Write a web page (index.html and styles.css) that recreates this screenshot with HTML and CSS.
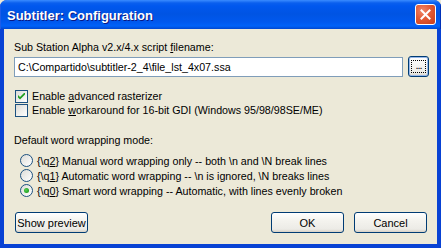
FILE: index.html
```html
<!DOCTYPE html>
<html lang="en">
<head>
    <meta charset="UTF-8">
    <title>Subtitler: Configuration</title>
    <link rel="stylesheet" href="styles.css">
</head>
<body>
    <div class="window">
        <div class="titlebar">
            <span class="title">Subtitler: Configuration</span>
            <button class="close-btn" aria-label="Close">
                <svg width="11" height="11" viewBox="0 0 11 11">
                    <path d="M1.5 1.5 L9.5 9.5 M9.5 1.5 L1.5 9.5" stroke="#fff" stroke-width="2" stroke-linecap="square"/>
                </svg>
            </button>
        </div>

        <div class="client">
            <div class="label">Sub Station Alpha v2.x/4.x script <u>f</u>ilename:</div>
            <div class="file-row">
                <input type="text" class="file-input" value="C:\Compartido\subtitler-2_4\file_lst_4x07.ssa">
                <button class="browse-btn"><span class="focus-rect">...</span></button>
            </div>

            <div class="checks">
                <label class="check-row">
                    <span class="checkbox">
                        <svg width="7" height="7" viewBox="0 0 7 7">
                            <path d="M0 2 L0 4.5 L2 6.5 L7 1.5 L7 -1 L2 4 Z" fill="#21A121"/>
                        </svg>
                    </span>
                    <span>Enable <u>a</u>dvanced rasterizer</span>
                </label>
                <label class="check-row">
                    <span class="checkbox"></span>
                    <span>Enable <u>w</u>orkaround for 16-bit GDI (Windows 95/98/98SE/ME)</span>
                </label>
            </div>

            <div class="label section-label">Default word wrapping mode:</div>
            <div class="radios">
                <label class="radio-row"><span class="radio"></span><span>{\q<u>2</u>} Manual word wrapping only -- both \n and \N break lines</span></label>
                <label class="radio-row"><span class="radio"></span><span>{\q<u>1</u>} Automatic word wrapping -- \n is ignored, \N breaks lines</span></label>
                <label class="radio-row"><span class="radio selected"></span><span>{\q<u>0</u>} Smart word wrapping -- Automatic, with lines evenly broken</span></label>
            </div>

            <div class="button-row">
                <button class="btn">Show preview</button>
                <div class="spacer"></div>
                <button class="btn">OK</button>
                <button class="btn">Cancel</button>
            </div>
        </div>
    </div>
</body>
</html>
```

FILE: styles.css
```css
html, body {
    margin: 0;
    padding: 0;
    background: #ECE9D8;
}
body {
    font-family: "Liberation Sans", Arial, sans-serif;
    font-size: 10.7px;
    color: #000;
}
.window {
    width: 441px;
    height: 248px;
    box-sizing: border-box;
    display: flex;
    flex-direction: column;
    background: #0842D4;
    border-radius: 7px 7px 0 0;
    overflow: hidden;
}
.titlebar {
    height: 29px;
    flex-shrink: 0;
    display: flex;
    align-items: center;
    padding: 0 5px 0 7px;
    background: linear-gradient(#3A8CFF 0, #0A5FEE 3px, #0058EE 6px, #0054E3 14px, #0058EE 22px, #0062F8 26px, #0047D0 29px);
    box-shadow: inset 1px 0 #1D5CE8, inset -1px 0 #0032B8;
}
.title {
    flex: 1;
    color: #fff;
    font-weight: bold;
    font-size: 13px;
    text-shadow: 1px 1px #0A1883;
    margin-top: 1px;
}
.close-btn {
    width: 21px;
    height: 21px;
    padding: 0;
    border: 1px solid #fff;
    border-radius: 3px;
    background: radial-gradient(circle at 35% 30%, #F0876A 0, #E25A35 45%, #C83D18 100%);
    display: flex;
    align-items: center;
    justify-content: center;
}
.client {
    flex: 1;
    margin: 0 4px 4px 4px;
    background: #ECE9D8;
    display: flex;
    flex-direction: column;
    padding: 12px 8px 11px 10px;
}
.label {
    line-height: 13px;
    white-space: nowrap;
}
.file-row {
    display: flex;
    align-items: center;
    gap: 5px;
    margin-top: 3px;
}
.file-input {
    width: 390px;
    height: 20px;
    box-sizing: border-box;
    border: 1px solid #7F9DB9;
    padding: 0 3px;
    margin: 0;
    font-family: "Liberation Sans", Arial, sans-serif;
    font-size: 10.7px;
    color: #000;
    background: #fff;
    outline: none;
}
.browse-btn {
    width: 21px;
    height: 21px;
    padding: 2px;
    margin-top: -1px;
    border: 1px solid #003C74;
    border-radius: 3px;
    background: linear-gradient(#FFFFFF, #ECEBE6 85%, #D6D0C5);
    box-shadow: inset 0 0 0 1px #98B8EA;
    display: block;
}
.focus-rect {
    display: block;
    height: 13px;
    box-sizing: border-box;
    border: 1px dotted #000;
    font-size: 11px;
    line-height: 8px;
    text-align: center;
    letter-spacing: -1px;
}
.checks {
    margin-top: 12px;
    display: flex;
    flex-direction: column;
    padding-left: 1px;
}
.check-row {
    display: flex;
    align-items: center;
    gap: 4px;
    height: 14px;
    white-space: nowrap;
}
.checkbox {
    width: 13px;
    height: 13px;
    box-sizing: border-box;
    border: 1px solid #1C5180;
    background: linear-gradient(135deg, #DCDCD7, #FFFFFF);
    display: flex;
    align-items: center;
    justify-content: center;
    flex-shrink: 0;
}
.section-label {
    margin-top: 17px;
}
.radios {
    margin-top: 6px;
    padding-left: 6px;
    display: flex;
    flex-direction: column;
}
.radio-row {
    display: flex;
    align-items: center;
    gap: 4px;
    height: 15px;
    white-space: nowrap;
}
.radio {
    width: 13px;
    height: 13px;
    box-sizing: border-box;
    border: 1px solid #1C5180;
    border-radius: 50%;
    background: linear-gradient(135deg, #DCDCD7, #FFFFFF);
    flex-shrink: 0;
    display: flex;
    align-items: center;
    justify-content: center;
}
.radio.selected::after {
    content: "";
    width: 5px;
    height: 5px;
    border-radius: 50%;
    background: radial-gradient(circle at 40% 40%, #55D055, #21A121 70%);
}
.button-row {
    margin-top: auto;
    display: flex;
    gap: 10px;
    padding-left: 1px;
    padding-right: 2px;
}
.spacer {
    flex: 1;
}
.btn {
    width: 73px;
    height: 21px;
    padding: 0;
    border: 1px solid #003C74;
    border-radius: 3px;
    background: linear-gradient(#FFFFFF, #F4F3EE 40%, #ECEBE6 85%, #D6D0C5);
    font-family: "Liberation Sans", Arial, sans-serif;
    font-size: 11px;
    color: #000;
}
```
